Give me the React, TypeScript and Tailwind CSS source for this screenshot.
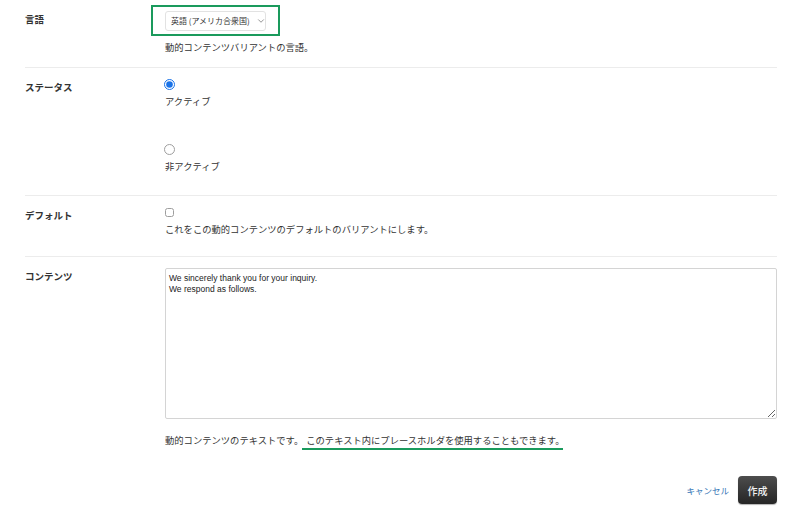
import { ChevronDown } from 'lucide-react';

const jp = "font-['Noto_Sans_CJK_JP','Noto_Sans',sans-serif]";

function Row({ label, children, last }: { label: string; children: React.ReactNode; last?: boolean }) {
  return (
    <div className={`grid grid-cols-[140px_1fr] pt-[11px] ${last ? '' : 'border-b border-[#ececec]'}`}>
      <div className="text-[9.5px] font-bold leading-4 text-[#333]">{label}</div>
      <div>{children}</div>
    </div>
  );
}

export default function App() {
  return (
    <div className={`w-[800px] h-[520px] bg-white pl-[25px] pr-[23px] text-[#333] ${jp}`}>
      {/* Language */}
      <Row label="言語">
        <div className="pb-[12px]">
          <div className="relative w-fit">
            <div className="h-[20px] w-[101px] flex items-center gap-[6px] pl-[5px] border border-[#e2e2e2] rounded-[3px] text-[8px] text-[#333] whitespace-nowrap">
              <span>英語 (アメリカ合衆国)</span>
              <ChevronDown size={10} strokeWidth={1.5} className="shrink-0 text-[#555]" />
            </div>
            {/* annotation box */}
            <div className="absolute -left-[14px] -top-[6px] -right-[14px] -bottom-[5px] border-[2.5px] border-[#1a9a5c]" />
          </div>
          <p className="mt-[8px] text-[9.3px] leading-4">動的コンテンツバリアントの言語。</p>
        </div>
      </Row>

      {/* Status */}
      <Row label="ステータス">
        <div className="pb-[21px] flex flex-col gap-[35px]">
          <label className="flex flex-col items-start">
            <input type="radio" name="status" defaultChecked className="m-0 ml-[-1px] w-[11px] h-[11px] accent-[#1a73e8]" />
            <span className="mt-[3px] text-[9.3px] leading-4">アクティブ</span>
          </label>
          <label className="flex flex-col items-start">
            <input type="radio" name="status" className="m-0 ml-[-1px] w-[11px] h-[11px] opacity-70" />
            <span className="mt-[3px] text-[9.3px] leading-4">非アクティブ</span>
          </label>
        </div>
      </Row>

      {/* Default */}
      <Row label="デフォルト">
        <div className="pb-[19px] flex flex-col items-start">
          <input type="checkbox" className="m-0 mt-[1px] w-[9px] h-[9px] opacity-70" />
          <p className="mt-[4px] text-[9.3px] leading-4">これをこの動的コンテンツのデフォルトのバリアントにします。</p>
        </div>
      </Row>

      {/* Content */}
      <Row label="コンテンツ" last>
        <div>
          <textarea
            readOnly
            defaultValue={'We sincerely thank you for your inquiry.\nWe respond as follows.'}
            className="block w-[612px] h-[151px] border border-[#d4d4d4] rounded-[2px] px-[3px] py-[4px] text-[8.5px] leading-[11px] text-[#222] font-['Liberation_Sans',sans-serif] outline-none"
          />
          <p className="mt-[13px] text-[9.3px] leading-4">
            動的コンテンツのテキストです。
            <span className="relative ml-[3px]">
              このテキスト内にプレースホルダを使用することもできます。
              <span className="absolute -left-[4px] right-[2px] -bottom-[3px] h-[2px] bg-[#1a9a5c]" />
            </span>
          </p>
        </div>
      </Row>

      {/* Actions */}
      <div className="mt-[28px] flex items-center justify-end gap-[9px]">
        <a className="text-[8.5px] text-[#3374b5] cursor-pointer">キャンセル</a>
        <button className="h-[28px] w-[39px] rounded-[4px] bg-gradient-to-b from-[#4d4d4d] to-[#262626] text-[#f2f2f2] text-[10px] font-medium shadow-[0_1px_1px_rgba(0,0,0,0.3)]">
          作成
        </button>
      </div>
    </div>
  );
}
